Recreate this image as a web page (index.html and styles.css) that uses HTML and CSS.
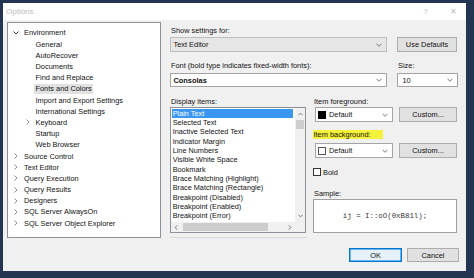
FILE: index.html
```html
<!DOCTYPE html>
<html>
<head>
<meta charset="utf-8">
<link rel="stylesheet" href="styles.css">
</head>
<body>
<div class="screen">
  <div class="dialog">
    <div class="titlebar">
      <span class="title">Options</span>
      <span class="tb-help">?</span>
      <span class="tb-close">✕</span>
    </div>
    <div class="client">
      <div class="main">
        <div class="tree">
          <div class="node lv0"><svg class="chev" viewBox="0 0 6 6"><polyline class="open" points="0.5,1.5 3,4 5.5,1.5"/></svg><span>Environment</span></div>
          <div class="node lv1"><span class="nochev"></span><span>General</span></div>
          <div class="node lv1"><span class="nochev"></span><span>AutoRecover</span></div>
          <div class="node lv1"><span class="nochev"></span><span>Documents</span></div>
          <div class="node lv1"><span class="nochev"></span><span>Find and Replace</span></div>
          <div class="node lv1"><span class="nochev"></span><span class="sel">Fonts and Colors</span></div>
          <div class="node lv1"><span class="nochev"></span><span>Import and Export Settings</span></div>
          <div class="node lv1"><span class="nochev"></span><span>International Settings</span></div>
          <div class="node lv1"><svg class="chev" viewBox="0 0 6 6"><polyline class="closed" points="1.5,0.5 4,3 1.5,5.5"/></svg><span>Keyboard</span></div>
          <div class="node lv1"><span class="nochev"></span><span>Startup</span></div>
          <div class="node lv1"><span class="nochev"></span><span>Web Browser</span></div>
          <div class="node lv0"><svg class="chev" viewBox="0 0 6 6"><polyline class="closed" points="1.5,0.5 4,3 1.5,5.5"/></svg><span>Source Control</span></div>
          <div class="node lv0"><svg class="chev" viewBox="0 0 6 6"><polyline class="closed" points="1.5,0.5 4,3 1.5,5.5"/></svg><span>Text Editor</span></div>
          <div class="node lv0"><svg class="chev" viewBox="0 0 6 6"><polyline class="closed" points="1.5,0.5 4,3 1.5,5.5"/></svg><span>Query Execution</span></div>
          <div class="node lv0"><svg class="chev" viewBox="0 0 6 6"><polyline class="closed" points="1.5,0.5 4,3 1.5,5.5"/></svg><span>Query Results</span></div>
          <div class="node lv0"><svg class="chev" viewBox="0 0 6 6"><polyline class="closed" points="1.5,0.5 4,3 1.5,5.5"/></svg><span>Designers</span></div>
          <div class="node lv0"><svg class="chev" viewBox="0 0 6 6"><polyline class="closed" points="1.5,0.5 4,3 1.5,5.5"/></svg><span>SQL Server AlwaysOn</span></div>
          <div class="node lv0"><svg class="chev" viewBox="0 0 6 6"><polyline class="closed" points="1.5,0.5 4,3 1.5,5.5"/></svg><span>SQL Server Object Explorer</span></div>
        </div>

        <div class="panel">
          <div class="label first">Show settings for:</div>
          <div class="row r1">
            <div class="combo ro wide"><span class="ctext">Text Editor</span><svg class="dd" viewBox="0 0 7 4"><polyline points="0.5,0.5 3.5,3.5 6.5,0.5"/></svg></div>
            <div class="btn usedef">Use Defaults</div>
          </div>
          <div class="row labels2">
            <span class="label fontlbl">Font (bold type indicates fixed-width fonts):</span>
            <span class="label">Size:</span>
          </div>
          <div class="row r2">
            <div class="combo wide short"><span class="ctext bold">Consolas</span><svg class="dd" viewBox="0 0 7 4"><polyline points="0.5,0.5 3.5,3.5 6.5,0.5"/></svg></div>
            <div class="combo size short"><span class="ctext">10</span><svg class="dd" viewBox="0 0 7 4"><polyline points="0.5,0.5 3.5,3.5 6.5,0.5"/></svg></div>
          </div>

          <div class="row lower">
            <div class="leftcol">
              <div class="label">Display items:</div>
              <div class="list">
                <div class="items">
                  <div class="item on">Plain Text</div>
                  <div class="item">Selected Text</div>
                  <div class="item">Inactive Selected Text</div>
                  <div class="item">Indicator Margin</div>
                  <div class="item">Line Numbers</div>
                  <div class="item">Visible White Space</div>
                  <div class="item">Bookmark</div>
                  <div class="item">Brace Matching (Highlight)</div>
                  <div class="item">Brace Matching (Rectangle)</div>
                  <div class="item">Breakpoint (Disabled)</div>
                  <div class="item">Breakpoint (Enabled)</div>
                  <div class="item">Breakpoint (Error)</div>
                </div>
                <div class="vscroll">
                  <div class="arr"><svg class="sa" viewBox="0 0 6 4"><polyline points="0.5,3.5 3,1 5.5,3.5"/></svg></div>
                  <div class="vthumb"></div>
                  <div class="vspace"></div>
                  <div class="arr"><svg class="sa" viewBox="0 0 6 4"><polyline points="0.5,0.5 3,3 5.5,0.5"/></svg></div>
                </div>
                <div class="hscroll">
                  <div class="harr"><svg class="sah" viewBox="0 0 4 6"><polyline points="3.5,0.5 1,3 3.5,5.5"/></svg></div>
                  <div class="hthumb"></div>
                  <div class="hspace"></div>
                  <div class="harr"><svg class="sah" viewBox="0 0 4 6"><polyline points="0.5,0.5 3,3 0.5,5.5"/></svg></div>
                </div>
                <div class="corner"></div>
              </div>
              <div class="rule"></div>
            </div>

            <div class="rightcol">
              <div class="label">Item foreground:</div>
              <div class="row crow fg">
                <div class="combo color"><span class="swatch black"></span><span class="ctext">Default</span><svg class="dd" viewBox="0 0 7 4"><polyline points="0.5,0.5 3.5,3.5 6.5,0.5"/></svg></div>
                <div class="btn custom">Custom...</div>
              </div>
              <div class="label hl-wrap"><span class="hl">Item background:</span></div>
              <div class="row crow bg">
                <div class="combo color"><span class="swatch white"></span><span class="ctext">Default</span><svg class="dd" viewBox="0 0 7 4"><polyline points="0.5,0.5 3.5,3.5 6.5,0.5"/></svg></div>
                <div class="btn custom">Custom...</div>
              </div>
              <div class="row boldrow"><span class="check"></span><span class="boldlbl">Bold</span></div>
              <div class="label samplelbl">Sample:</div>
              <div class="sample">ij = I::oO(0xB81l);</div>
            </div>
          </div>
        </div>
      </div>
      <div class="footer">
        <div class="btn ok">OK</div>
        <div class="btn cancel">Cancel</div>
      </div>
    </div>
  </div>
</div>
</body>
</html>
```

FILE: styles.css
```css
* { box-sizing: border-box; }
html, body { margin: 0; padding: 0; }
body {
  background: #243552;
  font-family: "Liberation Sans", Arial, sans-serif;
  font-size: 7.4px;
  color: #111;
}
.screen {
  width: 474px;
  height: 278px;
  overflow: hidden;
  padding: 3px 0 0 3px;
}
.dialog {
  width: 463px;
  height: 268px;
  display: flex;
  flex-direction: column;
  background: #f0f0f0;
}
.titlebar {
  height: 17px;
  background: #ffffff;
  display: flex;
  align-items: center;
  color: #bcbcbc;
}
.title { flex: 1; padding-left: 3px; font-size: 8px; }
.tb-help { width: 29px; text-align: center; font-size: 8px; }
.tb-close { width: 26px; text-align: center; font-size: 8px; }
.client {
  flex: 1;
  display: flex;
  flex-direction: column;
  padding: 2px 0 0 4px;
}
.main { display: flex; }

/* tree */
.tree {
  width: 154px;
  height: 216px;
  background: #fff;
  border: 1px solid #8c9099;
  padding-top: 4.4px;
}
.node {
  height: 11.2px;
  display: flex;
  align-items: center;
  white-space: nowrap;
}
.node.lv0 { padding-left: 5px; }
.node.lv1 { padding-left: 16.5px; }
.chev, .nochev { width: 6px; height: 6px; margin-right: 5px; flex: none; }
.chev polyline { fill: none; stroke-width: 1; }
.chev .open { stroke: #3a3a3a; }
.chev .closed { stroke: #8f8f8f; }
.sel {
  background: #e1e1e1;
  margin-left: -1.5px;
  padding: 0 1.5px;
  line-height: 9.5px;
}

/* right panel */
.panel {
  width: 288px;
  margin-left: 9px;
  padding-top: 4.2px;
}
.label { line-height: 9px; height: 9px; padding-left: 1px; white-space: nowrap; }
.row { display: flex; }
.r1 { margin-top: 2px; gap: 10px; }
.labels2 { margin-top: 8.5px; }
.fontlbl { width: 227px; }
.r2 { margin-top: 3.5px; gap: 10px; }
.lower { margin-top: 9.5px; }

.combo {
  height: 15px;
  background: #fff;
  border: 1px solid #a4a4a4;
  display: flex;
  align-items: center;
  padding: 0 4px 0 2.5px;
}
.combo.ro { background: #e6e6e6; border-color: #bdbdbd; }
.combo.wide { width: 217px; }
.combo.short { height: 14px; }
.combo.size { width: 61px; padding-left: 4.5px; }
.ctext { flex: 1; white-space: nowrap; }
.bold { font-weight: bold; }
.dd { width: 6px; height: 4px; flex: none; }
.dd polyline { fill: none; stroke: #666; stroke-width: 1; }

.btn {
  height: 15px;
  background: #e1e1e1;
  border: 1px solid #adadad;
  display: flex;
  align-items: center;
  justify-content: center;
  white-space: nowrap;
}
.usedef { width: 60px; }

/* list */
.leftcol { width: 137px; }
.list {
  margin-top: 1.5px;
  width: 136px;
  height: 126px;
  background: #fff;
  border: 1px solid #8c9099;
  display: grid;
  grid-template-columns: 1fr 10px;
  grid-template-rows: 1fr 10px;
}
.items {
  overflow: hidden;
  padding: 0.6px 2px 0 1px;
  font-size: 7.3px;
}
.item {
  height: 9.34px;
  line-height: 9.34px;
  padding-left: 0.7px;
  white-space: nowrap;
}
.item.on { background: #3a97f0; color: #fff; }
.vscroll {
  background: #f0f0f0;
  display: flex;
  flex-direction: column;
}
.arr { height: 12px; display: flex; align-items: center; justify-content: center; flex: none; }
.sa { width: 5px; height: 4px; }
.sa polyline, .sah polyline { fill: none; stroke: #606060; stroke-width: 1; }
.vthumb { height: 9px; margin: 0 1px; background: #cdcdcd; flex: none; }
.vspace { flex: 1; }
.hscroll {
  background: #f0f0f0;
  display: flex;
  align-items: stretch;
}
.harr { width: 10px; display: flex; align-items: center; justify-content: center; flex: none; }
.sah { width: 4px; height: 5px; }
.hthumb { width: 85px; margin: 1px 0 1px 2px; background: #cdcdcd; }
.hspace { flex: 1; }
.corner { background: #f0f0f0; }
.rule { margin-top: 3.5px; height: 1px; width: 137px; background: #d8d8d8; }

/* right column */
.rightcol { margin-left: 6px; width: 145px; }
.crow { margin-top: 1.5px; gap: 6px; padding-left: 2px; }
.combo.color { width: 78px; padding-left: 2px; }
.swatch { width: 8px; height: 8px; flex: none; margin-right: 3px; }
.swatch.black { background: #000; }
.swatch.white { background: #fff; border: 1px solid #555; }
.custom { width: 58px; }
.hl-wrap { margin-top: 8px; padding-left: 0; }
.hl {
  display: inline-block;
  background: #f4f23a;
  padding: 0 12px 0 0.5px;
  line-height: 9px;
}
.crow.bg { margin-top: 4px; }
.boldrow { margin-top: 10px; align-items: center; height: 8px; }
.check { width: 8px; height: 8px; background: #fff; border: 1px solid #333; margin-right: 2px; }
.samplelbl { margin-top: 12.5px; }
.sample {
  margin-top: 1.5px;
  width: 144px;
  height: 34px;
  background: #fff;
  border: 1px solid #a0a0a0;
  display: flex;
  align-items: center;
  justify-content: center;
  font-family: "Liberation Mono", "DejaVu Sans Mono", monospace;
  font-size: 7.4px;
  color: #333;
  white-space: pre;
}

/* footer */
.footer {
  margin-top: 10px;
  display: flex;
  justify-content: flex-end;
  gap: 5px;
  padding-right: 7px;
}
.ok, .cancel { height: 14px; }
.ok { width: 53px; border-color: #0078d7; box-shadow: inset 0 0 0 0.5px #0078d7; background: #e5f1fb; }
.cancel { width: 52px; }
```
